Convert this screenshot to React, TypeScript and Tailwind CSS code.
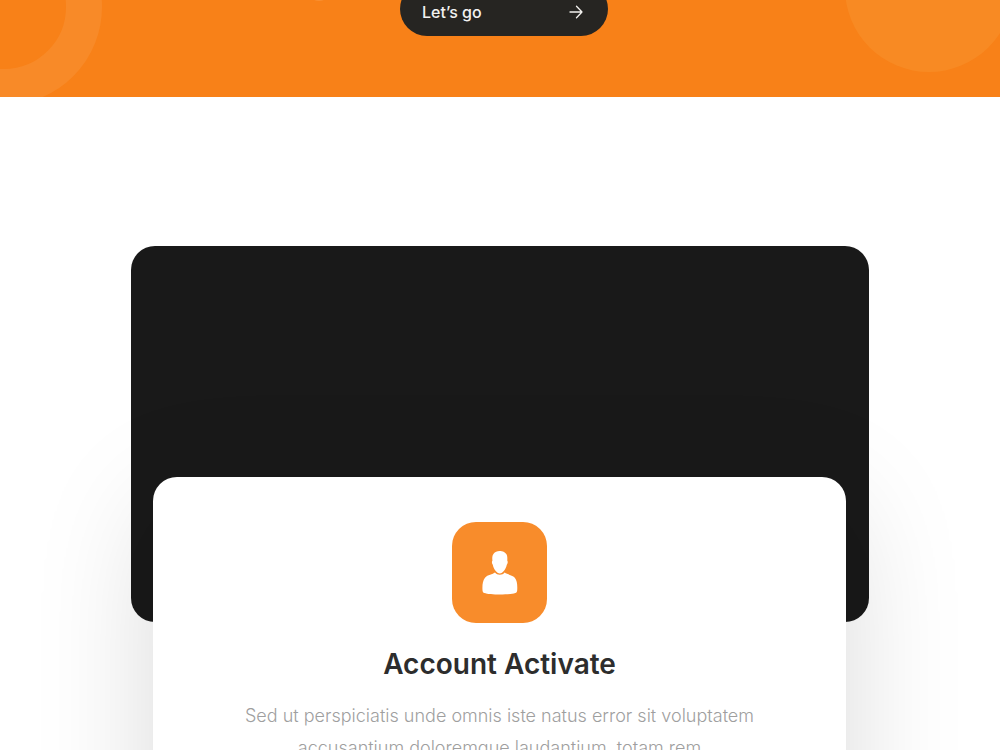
const HeroShapes = () => (
  <>
    <svg
      className="absolute left-0 bottom-0 w-[104px] h-[97px]"
      viewBox="0 0 104 97"
      fill="none"
      xmlns="http://www.w3.org/2000/svg"
    >
      <circle cx="4" cy="7" r="80" stroke="#F88A28" strokeWidth="36" />
    </svg>
    <svg
      className="absolute left-[31%] top-0 w-4 h-1"
      viewBox="0 0 16 4"
      fill="none"
      xmlns="http://www.w3.org/2000/svg"
    >
      <circle cx="9" cy="-11" r="12" fill="#F98F31" />
    </svg>
    <svg
      className="absolute right-0 bottom-0 w-[160px] h-[97px]"
      viewBox="0 0 160 97"
      fill="none"
      xmlns="http://www.w3.org/2000/svg"
    >
      <circle cx="89" cy="-12" r="84" fill="#F88A23" />
    </svg>
  </>
);

const ArrowIcon = ({ className }: { className?: string }) => (
  <svg className={className} viewBox="0 0 14 14" fill="none" xmlns="http://www.w3.org/2000/svg">
    <path
      d="M1 7H13M7.5 1.2L13 7L7.5 12.8"
      stroke="currentColor"
      strokeWidth="1.3"
      strokeLinecap="round"
      strokeLinejoin="round"
    />
  </svg>
);

const PersonIcon = ({ className }: { className?: string }) => (
  <svg className={className} viewBox="0 0 36 44" fill="currentColor" xmlns="http://www.w3.org/2000/svg">
    <path d="M17.5 0C20.6 0 24 1.4 25 4.4C25.5 6.2 25.3 8.4 25.3 9.8C26.1 10.4 25.8 12.8 24.8 13.8C23.8 18.5 20.8 22.4 17.8 22.4C14.8 22.4 11.7 18.5 10.8 13.8C9.8 12.8 9.6 10.4 10.4 9.8C10.2 7.2 10 4.8 11.6 2.8C13 1 15 0 17.5 0Z" />
    <path d="M13 21.6C14.2 23 15.9 23.8 17.8 23.8C19.8 23.8 21.5 23 22.7 21.6C25 23.4 30.2 23.8 32.8 26.8C35.2 29.8 35.5 34.6 35.2 39.2C35.1 40.8 34.7 41.5 33.2 42C28.4 44.1 7.6 44.1 2.4 42C1 41.5 .6 40.8 .5 39.2C.2 34.6 .6 29.8 3 26.8C5.6 23.8 10.7 23.4 13 21.6Z" />
  </svg>
);

const Hero = () => (
  <section className="relative flex h-[97px] shrink-0 flex-col items-center justify-end overflow-hidden bg-[#F88118] pb-[61px]">
    <HeroShapes />
    <button
      type="button"
      className="relative ml-2 flex h-[54px] w-52 shrink-0 items-center justify-between rounded-full bg-[#262522] pl-[22px] pr-[25px] pt-1.5 text-base font-medium text-[#F3F2F0]"
    >
      Let’s go
      <ArrowIcon className="h-3.5 w-3.5" />
    </button>
  </section>
);

const AccountCard = () => (
  <article className="relative ml-[22px] mr-[23px] -mt-[145px] flex flex-col items-center rounded-3xl bg-white px-20 pt-[45px] pb-48 text-center shadow-[0_30px_120px_rgba(0,0,0,0.15)]">
    <div className="flex h-[101px] w-[95px] items-center justify-center rounded-3xl bg-[#F88C2B] text-white">
      <PersonIcon className="h-11 w-9" />
    </div>
    <h2 className="mt-[25px] text-[28px] leading-8 font-semibold text-[#2D2D2D]">Account Activate</h2>
    <p className="mt-5 text-lg leading-8 font-light text-[#9F9F9F]">
      Sed ut perspiciatis unde omnis iste natus error sit voluptatem accusantium doloremque laudantium, totam rem
    </p>
  </article>
);

const App = () => (
  <main className="flex h-screen flex-col overflow-hidden bg-white font-['Inter',sans-serif]">
    <Hero />
    <section className="mx-[131px] mt-[149px]">
      <div className="h-[376px] rounded-3xl bg-[#191919]" />
      <AccountCard />
    </section>
  </main>
);

export default App;
